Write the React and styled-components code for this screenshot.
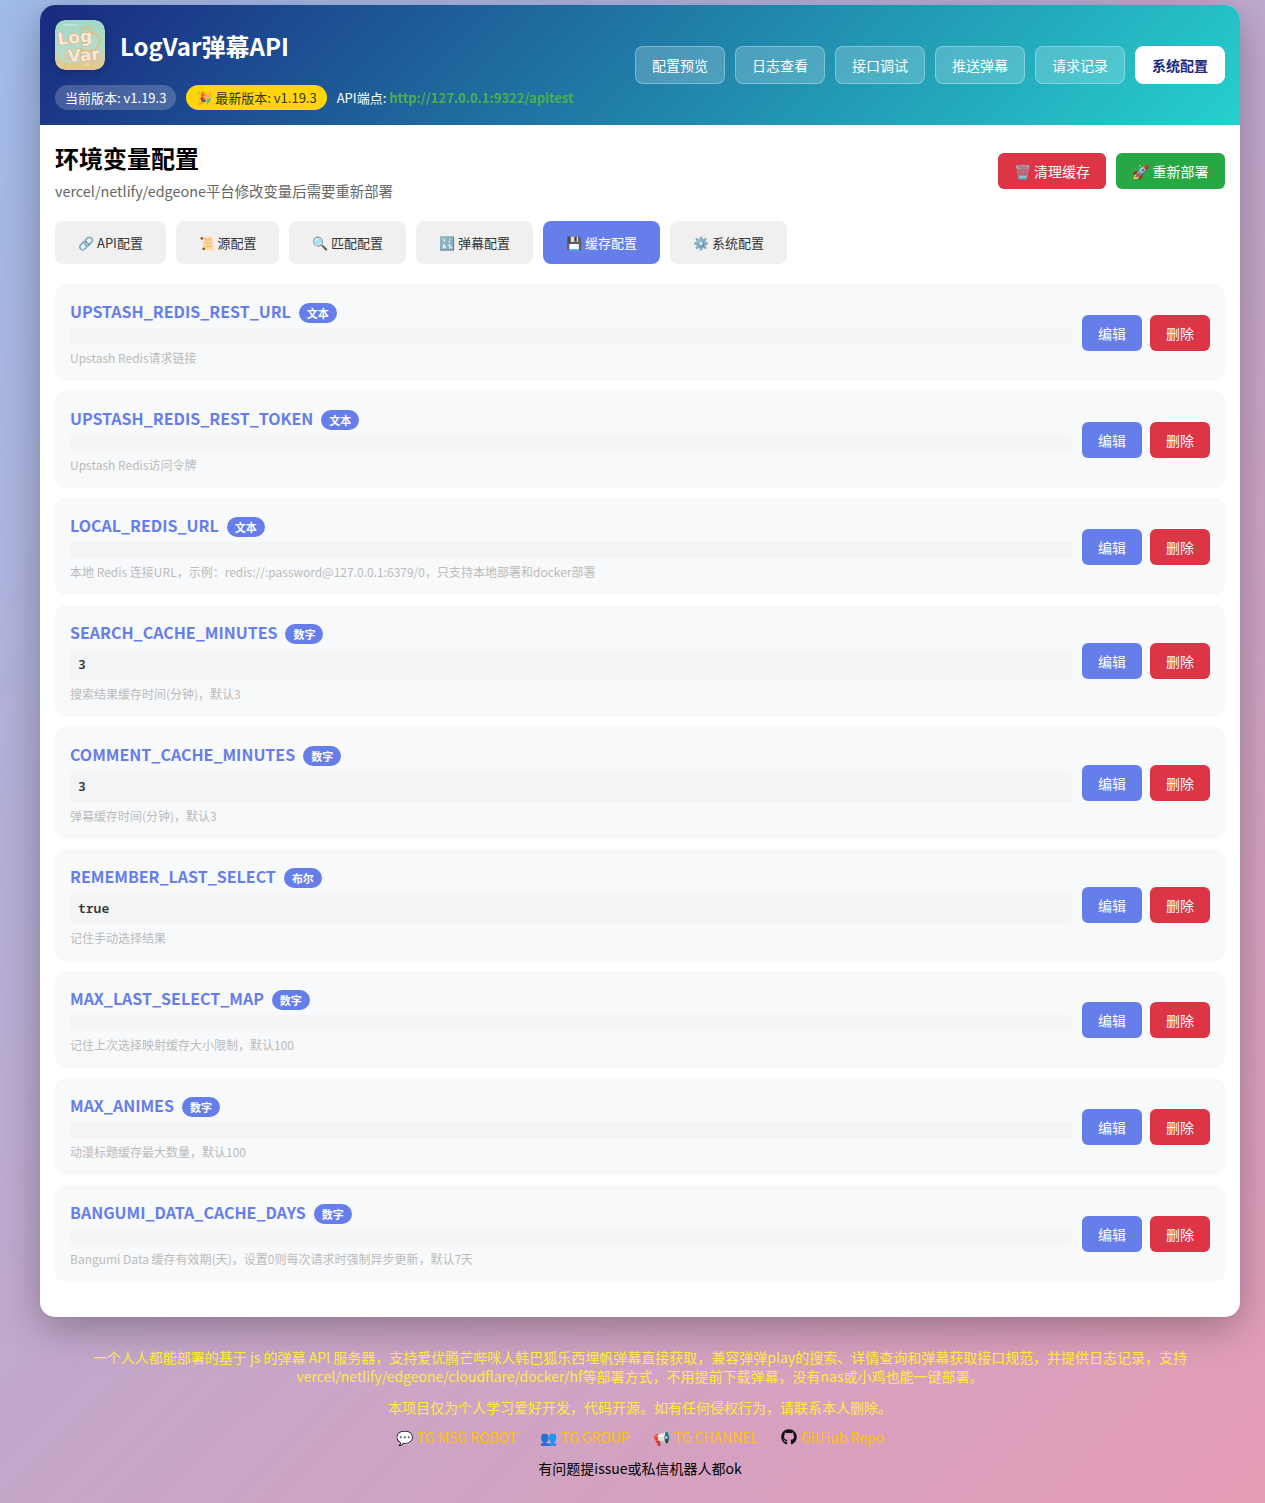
import React from "react";
import styled, { createGlobalStyle } from "styled-components";
import { FaGithub } from "react-icons/fa";

const GlobalStyle = createGlobalStyle`
  * {
    box-sizing: border-box;
  }
  html, body {
    margin: 0;
    padding: 0;
  }
  body {
    min-height: 1503px;
    font-family: "Noto Sans CJK SC", "Noto Sans", sans-serif;
    background: linear-gradient(135deg, #a0bcea 0%, #c2a8cc 50%, #e59cb6 100%);
    color: #000;
  }
`;

const navItems = ["配置预览", "日志查看", "接口调试", "推送弹幕", "请求记录", "系统配置"];

const tabs = [
  { label: "🔗 API配置", width: 111 },
  { label: "📜 源配置", width: 103 },
  { label: "🔍 匹配配置", width: 117 },
  { label: "🔣 弹幕配置", width: 117 },
  { label: "💾 缓存配置", width: 117, active: true },
  { label: "⚙️ 系统配置", width: 117 },
];

const envVars = [
  { name: "UPSTASH_REDIS_REST_URL", type: "文本", desc: "Upstash Redis请求链接" },
  { name: "UPSTASH_REDIS_REST_TOKEN", type: "文本", desc: "Upstash Redis访问令牌" },
  { name: "LOCAL_REDIS_URL", type: "文本", desc: "本地 Redis 连接URL，示例：redis://:password@127.0.0.1:6379/0，只支持本地部署和docker部署" },
  { name: "SEARCH_CACHE_MINUTES", type: "数字", value: "3", desc: "搜索结果缓存时间(分钟)，默认3" },
  { name: "COMMENT_CACHE_MINUTES", type: "数字", value: "3", desc: "弹幕缓存时间(分钟)，默认3" },
  { name: "REMEMBER_LAST_SELECT", type: "布尔", value: "true", desc: "记住手动选择结果" },
  { name: "MAX_LAST_SELECT_MAP", type: "数字", desc: "记住上次选择映射缓存大小限制，默认100" },
  { name: "MAX_ANIMES", type: "数字", desc: "动漫标题缓存最大数量，默认100" },
  { name: "BANGUMI_DATA_CACHE_DAYS", type: "数字", desc: "Bangumi Data 缓存有效期(天)，设置0则每次请求时强制异步更新，默认7天" },
];

function Logo() {
  return (
    <LogoSvg viewBox="0 0 50 50">
      <defs>
        <linearGradient id="logoBg" x1="0" y1="0" x2="0" y2="1">
          <stop offset="0" stopColor="#a0d8c8" />
          <stop offset="0.55" stopColor="#b4dcc8" />
          <stop offset="0.85" stopColor="#dccb9c" />
          <stop offset="1" stopColor="#e6c48c" />
        </linearGradient>
      </defs>
      <rect width="50" height="50" rx="10" fill="url(#logoBg)" />
      <path d="M30 15c10-6 18 2 13 11-3 6-12 6-18 3" fill="none" stroke="#e6bd74" strokeWidth="1.6" />
      <path d="M14 25c-9 3-10 13-3 16 5 2 12 0 17-2" fill="none" stroke="#a8e4e0" strokeWidth="1.6" />
      <circle cx="28" cy="9" r="1.7" fill="#e6bd74" />
      <circle cx="32" cy="7" r="1.7" fill="#e6bd74" />
      <circle cx="36" cy="9" r="1.7" fill="#e6bd74" />
      <path d="M8 5h14M30 45h4M38 40h3" stroke="#d6f0e8" strokeWidth="1" />
      <LogoWord x="3" y="25" transform="rotate(-6 3 25)">Log</LogoWord>
      <LogoWord x="13" y="42" transform="rotate(-4 13 42)">Var</LogoWord>
    </LogoSvg>
  );
}

function EnvRow({ item }) {
  return (
    <Row>
      <RowMain>
        <NameLine>
          <VarName>{item.name}</VarName>
          <TypeBadge>{item.type}</TypeBadge>
        </NameLine>
        <ValueBox>{item.value}</ValueBox>
        <Desc>{item.desc}</Desc>
      </RowMain>
      <RowActions>
        <SmallButton $bg="#667eea">编辑</SmallButton>
        <SmallButton $bg="#dc3545">删除</SmallButton>
      </RowActions>
    </Row>
  );
}

export default function App() {
  return (
    <>
      <GlobalStyle />
      <Page>
        <Container>
          <Header>
            <HeaderLeft>
              <Brand>
                <Logo />
                <BrandTitle>LogVar弹幕API</BrandTitle>
              </Brand>
              <VersionLine>
                <VersionPill>当前版本: v1.19.3</VersionPill>
                <VersionPill $latest>🎉 最新版本: v1.19.3</VersionPill>
                <Endpoint>
                  API端点: <EndpointUrl>http://127.0.0.1:9322/apitest</EndpointUrl>
                </Endpoint>
              </VersionLine>
            </HeaderLeft>
            <Nav>
              {navItems.map((item, i) => (
                <NavButton key={item} $active={i === navItems.length - 1}>
                  {item}
                </NavButton>
              ))}
            </Nav>
          </Header>

          <Content>
            <TitleBar>
              <div>
                <PageTitle>环境变量配置</PageTitle>
                <PageSub>vercel/netlify/edgeone平台修改变量后需要重新部署</PageSub>
              </div>
              <TitleActions>
                <ActionButton $bg="#dc3545" $width={108}>🗑️ 清理缓存</ActionButton>
                <ActionButton $bg="#28a745" $width={109}>🚀 重新部署</ActionButton>
              </TitleActions>
            </TitleBar>

            <Tabs>
              {tabs.map((tab) => (
                <Tab key={tab.label} $active={tab.active} $width={tab.width}>
                  {tab.label}
                </Tab>
              ))}
            </Tabs>

            <RowList>
              {envVars.map((item) => (
                <EnvRow key={item.name} item={item} />
              ))}
            </RowList>
          </Content>
        </Container>

        <Footer>
          <FooterText>
            一个人人都能部署的基于 js 的弹幕 API 服务器，支持爱优腾芒哔咪人韩巴狐乐西埋帆弹幕直接获取，兼容弹弹play的搜索、详情查询和弹幕获取接口规范，并提供日志记录，支持vercel/netlify/edgeone/cloudflare/docker/hf等部署方式，不用提前下载弹幕，没有nas或小鸡也能一键部署。
          </FooterText>
          <FooterNote>本项目仅为个人学习爱好开发，代码开源。如有任何侵权行为，请联系本人删除。</FooterNote>
          <FooterLinks>
            <FooterLink>💬 <a>TG MSG ROBOT</a></FooterLink>
            <FooterLink>👥 <a>TG GROUP</a></FooterLink>
            <FooterLink>📢 <a>TG CHANNEL</a></FooterLink>
            <FooterLink><FaGithub size={16} color="#111" /> <a>GitHub Repo</a></FooterLink>
          </FooterLinks>
          <FooterHint>有问题提issue或私信机器人都ok</FooterHint>
        </Footer>
      </Page>
    </>
  );
}

const Page = styled.div`
  padding: 5px 25px 0 40px;
`;

const Container = styled.div`
  width: 1200px;
  background: #fff;
  border-radius: 15px;
  overflow: hidden;
  box-shadow: 0 10px 40px rgba(0, 0, 0, 0.3);
`;

const Header = styled.header`
  height: 120px;
  padding: 15px;
  display: flex;
  justify-content: space-between;
  align-items: center;
  background: linear-gradient(135deg, #1a2980 0%, #26d0ce 100%);
  color: #fff;
`;

const HeaderLeft = styled.div`
  display: flex;
  flex-direction: column;
  gap: 15px;
`;

const Brand = styled.div`
  display: flex;
  align-items: center;
  gap: 15px;
`;

const LogoSvg = styled.svg`
  width: 50px;
  height: 50px;
  border-radius: 10px;
  box-shadow: 0 2px 8px rgba(0, 0, 0, 0.2);
`;

const LogoWord = styled.text`
  font-family: "DejaVu Sans", sans-serif;
  font-size: 17px;
  font-weight: 700;
  fill: #fbe8d2;
  stroke: #d2ac8c;
  stroke-width: 1.2px;
  paint-order: stroke;
`;

const BrandTitle = styled.h1`
  margin: 0;
  font-size: 24px;
  font-weight: 600;
  line-height: 35px;
`;

const VersionLine = styled.div`
  display: flex;
  align-items: center;
  gap: 10px;
  height: 25px;
`;

const VersionPill = styled.span`
  height: 25px;
  padding: 0 10px;
  border-radius: 12.5px;
  font-size: 13px;
  line-height: 25px;
  white-space: nowrap;
  background: ${(p) => (p.$latest ? "#ffd60a" : "rgba(255, 255, 255, 0.2)")};
  color: ${(p) => (p.$latest ? "#333" : "#fff")};
`;

const Endpoint = styled.span`
  font-size: 13px;
  white-space: nowrap;
`;

const EndpointUrl = styled.span`
  color: #4caf50;
  font-weight: 700;
`;

const Nav = styled.nav`
  display: flex;
  gap: 10px;
`;

const NavButton = styled.button`
  width: 90px;
  height: 38px;
  padding: 0;
  font-family: inherit;
  font-size: 14px;
  border-radius: 8px;
  border: 1px solid ${(p) => (p.$active ? "#fff" : "rgba(255, 255, 255, 0.3)")};
  background: ${(p) => (p.$active ? "#fff" : "rgba(255, 255, 255, 0.2)")};
  color: ${(p) => (p.$active ? "#1a2980" : "#fff")};
  font-weight: ${(p) => (p.$active ? 700 : 400)};
`;

const Content = styled.main`
  padding: 15px 15px 35px;
`;

const TitleBar = styled.div`
  display: flex;
  justify-content: space-between;
  align-items: center;
  margin-bottom: 19px;
`;

const PageTitle = styled.h2`
  margin: 0;
  font-size: 24px;
  font-weight: 700;
  line-height: 36px;
`;

const PageSub = styled.p`
  margin: 3px 0 0;
  padding-top: 1px;
  font-size: 14.4px;
  line-height: 22px;
  color: #666;
`;

const TitleActions = styled.div`
  display: flex;
  gap: 10px;
`;

const ActionButton = styled.button`
  width: ${(p) => p.$width}px;
  height: 36px;
  padding: 0;
  font-family: inherit;
  font-size: 14px;
  color: #fff;
  border: 0;
  border-radius: 6px;
  background: ${(p) => p.$bg};
`;

const Tabs = styled.div`
  display: flex;
  gap: 10px;
  margin-bottom: 20px;
`;

const Tab = styled.button`
  width: ${(p) => p.$width}px;
  height: 43px;
  padding: 0;
  font-family: inherit;
  font-size: 13px;
  border: 0;
  border-radius: 8px;
  background: ${(p) => (p.$active ? "#667eea" : "#f0f0f0")};
  color: ${(p) => (p.$active ? "#fff" : "#333")};
`;

const RowList = styled.div`
  display: flex;
  flex-direction: column;
  gap: 10px;
`;

const Row = styled.div`
  display: flex;
  align-items: center;
  gap: 10px;
  padding: 15px;
  border-radius: 10px;
  background: #f8f9fa;
`;

const RowMain = styled.div`
  flex: 1;
  min-width: 0;
`;

const NameLine = styled.div`
  display: flex;
  align-items: center;
  gap: 8px;
  height: 24px;
  margin-bottom: 5px;
`;

const VarName = styled.span`
  font-size: 16px;
  font-weight: 600;
  color: #667eea;
`;

const TypeBadge = styled.span`
  width: 38px;
  height: 20px;
  margin-top: 4px;
  border-radius: 10px;
  background: #667eea;
  color: #fff;
  font-size: 11px;
  font-weight: 700;
  line-height: 20px;
  text-align: center;
`;

const ValueBox = styled.div`
  min-height: 16px;
  padding: 8px;
  border-radius: 4px;
  background: #f3f4f6;
  color: #333;
  font-family: "Noto Sans Mono", "DejaVu Sans Mono", monospace;
  font-size: 13px;
  font-weight: 600;
  line-height: 15px;

  &:empty {
    padding: 0 8px;
  }
`;

const Desc = styled.div`
  margin-top: 5px;
  font-size: 12px;
  line-height: 17px;
  color: #bbb;
`;

const RowActions = styled.div`
  display: flex;
  gap: 8px;
`;

const SmallButton = styled.button`
  width: 60px;
  height: 36px;
  padding: 0;
  font-family: inherit;
  font-size: 14px;
  color: #fff;
  border: 0;
  border-radius: 6px;
  background: ${(p) => p.$bg};
`;

const Footer = styled.footer`
  width: 1200px;
  padding: 31px 50px 0;
  text-align: center;
  font-size: 14px;
`;

const FooterText = styled.p`
  margin: 0;
  line-height: 19px;
  color: #ffeb3b;
`;

const FooterNote = styled.p`
  margin: 12px 0 0;
  line-height: 19px;
  color: #ffeb3b;
`;

const FooterLinks = styled.div`
  display: flex;
  justify-content: center;
  gap: 23px;
  margin-top: 10px;
  line-height: 20px;
`;

const FooterLink = styled.span`
  display: inline-flex;
  align-items: center;
  gap: 4px;

  a {
    color: #ffc107;
  }
`;

const FooterHint = styled.p`
  margin: 11px 0 0;
  line-height: 20px;
  color: #000;
`;
